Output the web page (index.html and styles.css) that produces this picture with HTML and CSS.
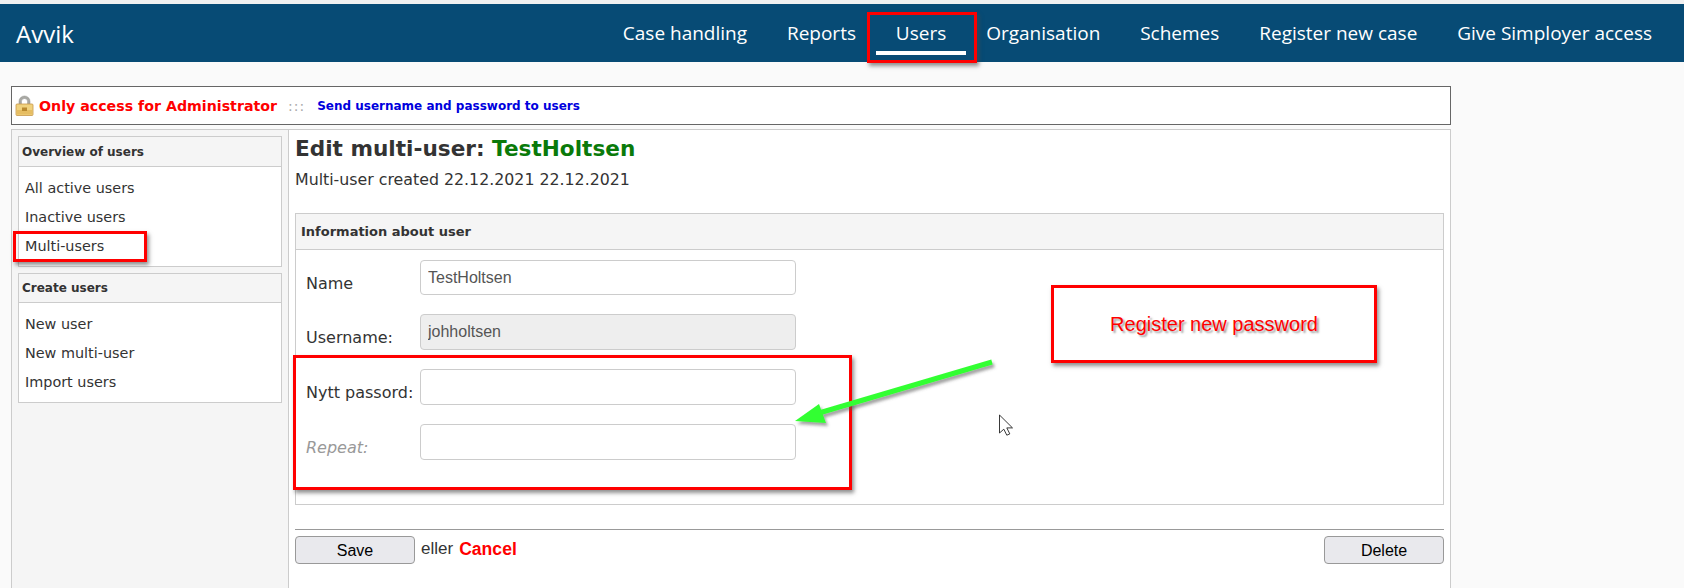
FILE: index.html
```html
<!DOCTYPE html>
<html lang="en">
<head>
<meta charset="utf-8">
<title>Avvik</title>
<link rel="stylesheet" href="styles.css">
</head>
<body>
<div class="strip"></div>
<header class="topbar">
  <div class="brand">Avvik</div>
  <nav class="nav">
    <a>Case handling</a>
    <a>Reports</a>
    <a class="active">Users</a>
    <a>Organisation</a>
    <a>Schemes</a>
    <a>Register new case</a>
    <a>Give Simployer access</a>
  </nav>
</header>
<div class="notice">
  <svg class="lock" width="19" height="21" viewBox="0 0 19 21">
    <path d="M4 10V6.500a5.500 5.500 0 0 1 11 0V10h-2.400V6.600a3.100 3.100 0 0 0-6.200 0V10z" fill="#a9a9a4" stroke="#8c8c88" stroke-width=".5"/>
    <rect x="1" y="9" width="17" height="11.500" rx="1" fill="#f0d27e" stroke="#c8974a" stroke-width=".8"/>
    <rect x="2" y="15" width="15" height="4.500" fill="#e6bd62"/>
    <rect x="7" y="12.500" width="5" height="3.500" fill="#b98a30"/>
  </svg>
  <strong class="warn">Only access for Administrator</strong>
  <span class="sep">:::</span>
  <a class="send">Send username and password to users</a>
</div>
<div class="shell">
  <aside class="side">
    <section class="box">
      <h3 class="box-head">Overview of users</h3>
      <ul class="links">
        <li>All active users</li>
        <li>Inactive users</li>
        <li>Multi-users</li>
      </ul>
    </section>
    <section class="box">
      <h3 class="box-head">Create users</h3>
      <ul class="links">
        <li>New user</li>
        <li>New multi-user</li>
        <li>Import users</li>
      </ul>
    </section>
  </aside>
  <main class="main">
    <h1 class="title">Edit multi-user: <span class="green">TestHoltsen</span></h1>
    <p class="sub">Multi-user created 22.12.2021 22.12.2021</p>
    <section class="info">
      <h3 class="info-head">Information about user</h3>
      <div class="form">
        <div class="row"><label>Name</label><input class="field" value="TestHoltsen"></div>
        <div class="row"><label>Username:</label><input class="field off" value="johholtsen" disabled></div>
        <div class="row"><label>Nytt passord:</label><input class="field"></div>
        <div class="row"><label class="muted">Repeat:</label><input class="field"></div>
      </div>
    </section>
    <div class="actions">
      <button class="btn">Save</button>
      <span class="or">eller</span>
      <a class="cancel">Cancel</a>
      <button class="btn del">Delete</button>
    </div>
  </main>
</div>

<div class="mark mark-users"></div>
<div class="mark mark-multi"></div>
<div class="mark mark-pass"></div>
<div class="mark callout">Register new password</div>
<svg class="overlay" width="1684" height="588" viewBox="0 0 1684 588">
  <defs>
    <filter id="sh" x="-10%" y="-20%" width="130%" height="150%">
      <feDropShadow dx="2" dy="3" stdDeviation="1.500" flood-color="#555" flood-opacity=".55"/>
    </filter>
  </defs>
  <g filter="url(#sh)">
    <path d="M992 362 L819 413" stroke="#33ff33" stroke-width="5" fill="none"/>
    <path d="M795 421 L819 404 L826 423 Z" fill="#33ff33"/>
  </g>
  <path d="M999.500 415v18l4.300-3.800 3 6 3-1.300-3-6h5.700z" fill="#fff" stroke="#222" stroke-width=".9"/>
</svg>
</body>
</html>
```
FILE: styles.css
```css
* { box-sizing: border-box; }
html, body { margin: 0; height: 588px; overflow: hidden; }
body { background: #fafafa; color: #333; font-family: "DejaVu Sans", sans-serif; position: relative; }

.strip { height: 4px; background: #f0f0f0; }
.topbar { height: 58px; background: #074b75; color: #fff; display: flex; align-items: center; justify-content: space-between; padding: 0 32px 0 16px; font-family: "Open Sans", sans-serif; }
.brand { font-size: 24px; }
.nav { display: flex; gap: 39.900px; font-size: 19px; }
.nav a { display: block; position: relative; }
.nav .active::after { content: ""; position: absolute; left: -20px; right: -20px; top: 31px; height: 4px; background: #fff; }

.notice { margin: 24px 0 0 11px; width: 1440px; height: 39px; background: #fff; border: 1px solid #666; display: flex; align-items: center; padding-left: 3px; font-weight: bold; }
.lock { flex: none; margin-right: 5px; }
.warn { color: #f00; font-size: 14.200px; }
.sep { color: #aaa; font-size: 14px; font-weight: normal; margin: 0 12px 0 11px; letter-spacing: 1px; }
.send { color: #00d; font-size: 12px; }

.shell { margin: 4px 0 0 11px; width: 1440px; height: 470px; border: 1px solid #ccc; background: #fff; display: flex; }
.side { width: 277px; flex: none; background: #f5f5f5; border-right: 1px solid #ccc; padding: 6px 5px 0 6px; display: flex; flex-direction: column; gap: 6px; }
.box { background: #fff; border: 1px solid #ccc; width: 264px; }
.box-head { margin: 0; height: 30px; background: #f5f5f5; border-bottom: 1px solid #ccc; font-size: 12px; line-height: 30px; padding-left: 3px; }
.box + .box .box-head { height: 29px; line-height: 29px; }
.links { list-style: none; margin: 0; padding: 7px 0 5px 6px; }
.links li { height: 29px; line-height: 29px; font-size: 14.400px; }

.main { flex: 1; padding: 6px 6px 0; }
.title { margin: 0; font-size: 21.600px; line-height: 26px; font-weight: bold; }
.green { color: #0a7a0a; }
.sub { margin: 8px 0 0; font-size: 15.800px; line-height: 20px; }
.info { margin-top: 23px; height: 292px; width: 1149px; border: 1px solid #ccc; }
.info-head { margin: 0; height: 36px; background: #f5f5f5; border-bottom: 1px solid #ccc; font-size: 13px; line-height: 36px; padding-left: 5px; }
.form { padding: 10px 0 0 10px; display: flex; flex-direction: column; gap: 19px; }
.row { display: flex; height: 36px; }
.row:first-child { height: 35px; }
.row label { width: 114px; flex: none; font-size: 16px; line-height: 20px; padding-top: 14px; white-space: nowrap; }
.row label.muted { color: #999; font-style: italic; }
.field { width: 376px; height: 100%; border: 1px solid #ccc; border-radius: 4px; background: #fff; padding: 0 7px; font: 16px "Liberation Sans", sans-serif; color: #555; margin: 0; }
.off { background: #eee; }

.actions { margin-top: 24px; width: 1149px; border-top: 1px solid #999; padding-top: 6px; display: flex; align-items: flex-start; }
.btn { width: 120px; height: 28px; border: 1px solid #999; border-radius: 4px; background: #e9e9ed; font: 16px "Liberation Sans", sans-serif; color: #000; padding: 1px 0 0; }
.or { font: 17px/26px "Liberation Sans", sans-serif; margin-left: 6px; }
.cancel { color: #f00; font: bold 17.600px/26px "Liberation Sans", sans-serif; margin-left: 6px; }
.del { margin-left: auto; }

.mark { position: absolute; border: 3px solid #f00; box-shadow: 2px 3px 4px rgba(70,70,70,.6); }
.mark-users { left: 867px; top: 12px; width: 110px; height: 51px; }
.mark-multi { left: 13px; top: 231px; width: 134px; height: 31px; }
.mark-pass { left: 293px; top: 355px; width: 559px; height: 135px; }
.callout { left: 1051px; top: 285px; width: 326px; height: 78px; display: flex; align-items: center; justify-content: center; background: #fff; color: #f00; font: 20px "Liberation Sans", sans-serif; text-shadow: 2px 2px 2px rgba(80,80,80,.55); }
.overlay { position: absolute; left: 0; top: 0; pointer-events: none; }
```
